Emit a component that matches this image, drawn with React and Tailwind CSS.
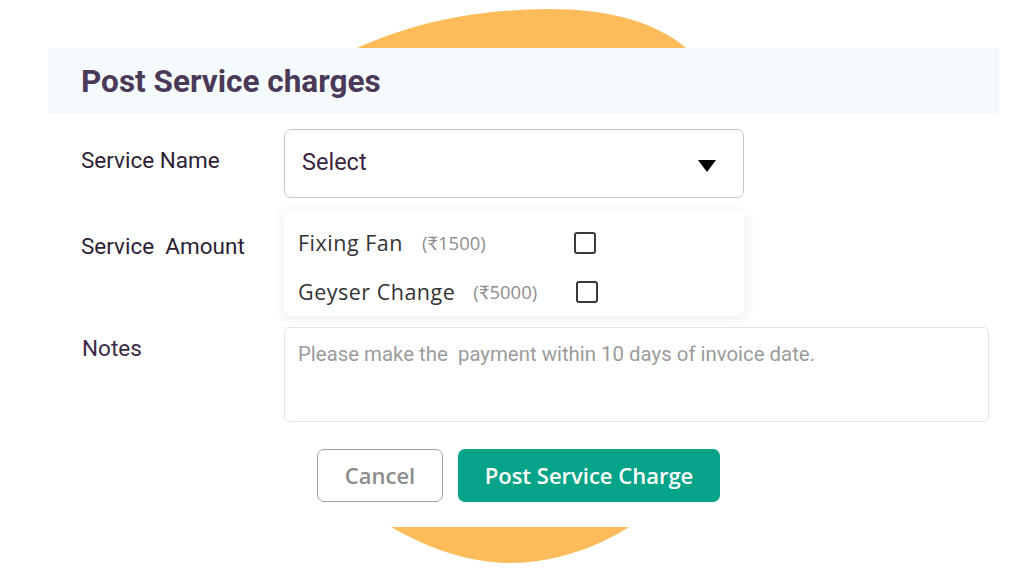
import React from "react";

function Checkbox() {
  return <span className="inline-block w-[22px] h-[22px] rounded-[3px] border-2 border-[#3a3a3a] bg-white" />;
}

export default function App() {
  return (
    <div className="relative w-[1024px] h-[576px] bg-white overflow-hidden" style={{ fontFamily: "Roboto, 'Liberation Sans', sans-serif" }}>
      <svg className="absolute inset-0" width="1024" height="576" viewBox="0 0 1024 576">
        <path d="M357 48 C 420 20, 480 10, 547 9 C 610 9, 655 22, 686 48 Z" fill="#fdbb5a" />
        <path d="M391 527 C 440 555, 480 563, 510 563 C 545 563, 590 552, 629 527 Z" fill="#fdbb5a" />
      </svg>
      <div className="relative pt-[48px] pl-[48px]">
        <div className="w-[951px] bg-white">
          <div className="h-[66px] bg-[#f5fafd] pl-[33px] flex items-center">
            <h1 className="text-[31.5px] font-bold text-[#4a3a58] leading-none pt-[2px]">Post Service charges</h1>
          </div>
          <div className="pl-[33px] pt-[15px] pb-[25px]">
            <div className="flex items-start">
              <div className="w-[203px] pt-[18px] text-[22.5px] leading-[26px] text-[#2d1f35]">Service Name</div>
              <div className="w-[460px] h-[69px] rounded-[7px] border border-[#c7c7c9] flex items-center justify-between pl-[17px] pr-[27px]">
                <span className="text-[23.5px] text-[#3b2442] pb-[2px]">Select</span>
                <svg width="18" height="12" viewBox="0 0 18 12" className="mt-[4px]"><path d="M0 0 H18 L9 12 Z" fill="#000" /></svg>
              </div>
            </div>
            <div className="flex items-start mt-[13px]">
              <div className="w-[203px] pt-[22px] text-[22.5px] leading-[26px] text-[#2d1f35] whitespace-pre">Service  Amount</div>
              <div className="w-[460px] h-[105px] rounded-[7px] bg-white shadow-[0_2px_14px_rgba(0,0,0,0.09)] pl-[14px] pt-[19px]" style={{ fontFamily: "'Open Sans', Lato, sans-serif" }}>
                <div className="flex items-center h-[26px]">
                  <span className="text-[21.5px] text-[#333] tracking-[0.5px]">Fixing Fan</span>
                  <span className="ml-[19px] text-[18.5px] text-[#8e8e8e]">(₹1500)</span>
                  <span className="ml-auto mr-[148px] flex"><Checkbox /></span>
                </div>
                <div className="flex items-center h-[26px] mt-[23px]">
                  <span className="text-[21.5px] text-[#333] tracking-[0.5px]">Geyser Change</span>
                  <span className="ml-[18px] text-[18.5px] text-[#8e8e8e]">(₹5000)</span>
                  <span className="ml-auto mr-[146px] flex"><Checkbox /></span>
                </div>
              </div>
            </div>
            <div className="flex items-start mt-[11px]">
              <div className="w-[203px] pt-[8px] pl-[1px] text-[22.5px] leading-[26px] text-[#3a2a48]">Notes</div>
              <div className="w-[705px] h-[95px] rounded-[5px] border border-[#e2e3e5] pl-[13px] pt-[15px] text-[20.4px] leading-[22px] text-[#9b9b9b] whitespace-pre">
                Please make the  payment within 10 days of invoice date.
              </div>
            </div>
            <div className="flex mt-[27px] pl-[236px] gap-[15px]" style={{ fontFamily: "'Open Sans', sans-serif" }}>
              <button className="w-[126px] h-[53px] rounded-[7px] border-[1.5px] border-[#a0a0a0] text-[22px] font-semibold text-[#8c8c8c] bg-white">Cancel</button>
              <button className="w-[262px] h-[53px] rounded-[7px] bg-[#05a488] text-[22px] font-semibold text-white">Post Service Charge</button>
            </div>
          </div>
        </div>
      </div>
    </div>
  );
}
